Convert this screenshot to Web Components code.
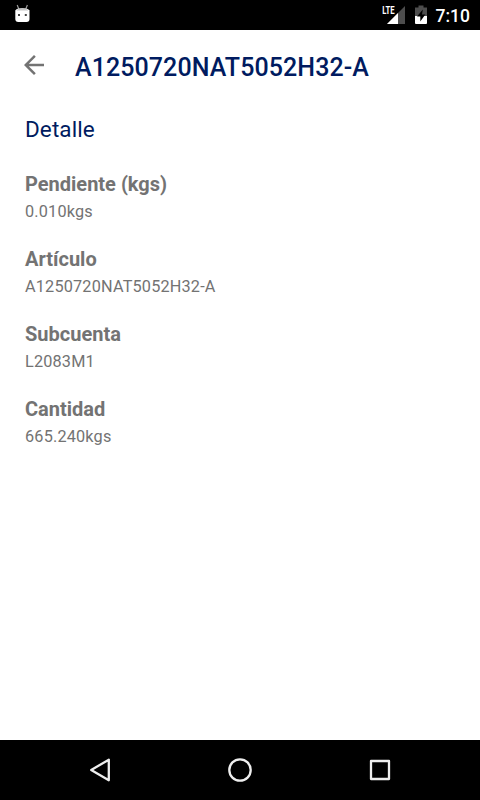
<!DOCTYPE html>
<html lang="es">
<head>
<meta charset="utf-8">
<title>Detalle</title>
<style>
  body {
    margin: 0;
    font-family: Roboto, "Liberation Sans", sans-serif;
  }
</style>
</head>
<body>
<app-screen>
  <status-bar slot="top" time="7:10"></status-bar>
  <title-bar>A1250720NAT5052H32-A</title-bar>
  <detail-section heading="Detalle">
    <detail-item label="Pendiente (kgs)">0.010kgs</detail-item>
    <detail-item label="Artículo">A1250720NAT5052H32-A</detail-item>
    <detail-item label="Subcuenta">L2083M1</detail-item>
    <detail-item label="Cantidad">665.240kgs</detail-item>
  </detail-section>
  <nav-bar slot="bottom"></nav-bar>
</app-screen>
<script>
class AppScreen extends HTMLElement {
  constructor() {
    super();
    this.attachShadow({ mode: 'open' });
  }
  connectedCallback() {
    this.shadowRoot.innerHTML = `
      <style>
        :host {
          display: flex;
          flex-direction: column;
          width: 480px;
          height: 800px;
          background: #fff;
          overflow: hidden;
        }
        main {
          flex: 1;
        }
      </style>
      <slot name="top"></slot>
      <main><slot></slot></main>
      <slot name="bottom"></slot>
    `;
  }
}
customElements.define('app-screen', AppScreen);

class StatusBar extends HTMLElement {
  constructor() {
    super();
    this.attachShadow({ mode: 'open' });
  }
  connectedCallback() {
    const time = this.getAttribute('time') || '';
    this.shadowRoot.innerHTML = `
      <style>
        :host {
          display: flex;
          align-items: center;
          height: 30px;
          padding: 0 10px 0 12px;
          box-sizing: border-box;
          background: #000;
          color: #fff;
        }
        svg {
          display: block;
        }
        .signal {
          margin-left: auto;
        }
        .battery {
          margin-left: 8px;
        }
        .time {
          margin-left: 8px;
          padding-top: 2px;
          font-size: 17.5px;
          line-height: 20px;
          font-weight: 500;
        }
      </style>
      <svg width="20" height="30" viewBox="0 0 20 30">
        <path d="M5.200 5l1.600 4M15.400 5l-1.600 4" stroke="#999" stroke-width="1.200"/>
        <path d="M3.300 10.500Q4.500 8.200 10.300 8.200T17.500 10.500V19Q17.500 22 14.500 22H6.300Q3.300 22 3.300 19z" fill="#fff"/>
        <path d="M4.500 10.500Q6 8.200 10.300 8.200T16.200 10.500z" fill="#c4c4c4"/>
        <path d="M6 14h2v2H6zM12.800 14h2v2h-2z" fill="#444"/>
      </svg>
      <svg class="signal" width="26" height="30" viewBox="0 0 26 30">
        <path d="M25 6v18H7z" fill="#4d4d4d"/>
        <path d="M18 13v11H7z" fill="#fff"/>
        <path d="M0 4h15.500v11H0z" fill="#000"/>
        <text x="2.300" y="14.400" font-size="11.500" font-weight="700" fill="#fff" textLength="12.400" lengthAdjust="spacingAndGlyphs">LTE</text>
      </svg>
      <svg class="battery" width="14" height="30" viewBox="0 0 14 30">
        <path d="M1 7.500h3.500V5.500h5v2H13V24H1z" fill="#4d4d4d"/>
        <path d="M1 16h12v6.800q0 1.200-1.200 1.200H2.200Q1 24 1 22.800z" fill="#fff"/>
        <path d="M8.800 9.500L3 16.500h3.300v5L11.300 14.500H8z" fill="#000"/>
      </svg>
      <span class="time">${time}</span>
    `;
  }
}
customElements.define('status-bar', StatusBar);

class TitleBar extends HTMLElement {
  constructor() {
    super();
    this.attachShadow({ mode: 'open' });
  }
  connectedCallback() {
    this.shadowRoot.innerHTML = `
      <style>
        :host {
          display: flex;
          align-items: center;
          height: 70px;
          padding-left: 19px;
          box-sizing: border-box;
          color: #001b60;
        }
        svg {
          display: block;
          margin-bottom: 1px;
        }
        h1 {
          margin: 0 0 0 26px;
          padding-top: 5px;
          font-size: 25px;
          line-height: 30px;
          font-weight: 500;
          letter-spacing: 0.08px;
        }
      </style>
      <svg width="30" height="30" viewBox="0 0 24 24">
        <path d="M20 11H7.830l5.590-5.590L12 4l-8 8 8 8 1.410-1.410L7.830 13H20v-2z" fill="#737373"/>
      </svg>
      <h1><slot></slot></h1>
    `;
  }
}
customElements.define('title-bar', TitleBar);

class DetailSection extends HTMLElement {
  constructor() {
    super();
    this.attachShadow({ mode: 'open' });
  }
  connectedCallback() {
    const heading = this.getAttribute('heading') || '';
    this.shadowRoot.innerHTML = `
      <style>
        :host {
          display: block;
          padding: 15px 25px 0;
        }
        h2 {
          margin: 0 0 27px;
          font-size: 22.5px;
          line-height: 28px;
          font-weight: 400;
          letter-spacing: 0.1px;
          color: #001b60;
        }
        .items {
          display: flex;
          flex-direction: column;
          gap: 20px;
        }
      </style>
      <h2>${heading}</h2>
      <div class="items"><slot></slot></div>
    `;
  }
}
customElements.define('detail-section', DetailSection);

class DetailItem extends HTMLElement {
  constructor() {
    super();
    this.attachShadow({ mode: 'open' });
  }
  connectedCallback() {
    const label = this.getAttribute('label') || '';
    this.shadowRoot.innerHTML = `
      <style>
        :host {
          display: block;
          color: #737373;
        }
        .label {
          font-size: 20px;
          line-height: 28px;
          font-weight: 700;
        }
        .value {
          font-size: 16.25px;
          line-height: 27px;
          letter-spacing: 0.18px;
        }
      </style>
      <div class="label">${label}</div>
      <div class="value"><slot></slot></div>
    `;
  }
}
customElements.define('detail-item', DetailItem);

class NavBar extends HTMLElement {
  constructor() {
    super();
    this.attachShadow({ mode: 'open' });
  }
  connectedCallback() {
    this.shadowRoot.innerHTML = `
      <style>
        :host {
          display: flex;
          justify-content: center;
          align-items: center;
          gap: 110px;
          height: 60px;
          background: #000;
        }
        svg {
          display: block;
          fill: none;
          stroke: #eee;
          stroke-width: 2.3;
          stroke-linejoin: round;
        }
      </style>
      <svg width="30" height="30" viewBox="0 0 30 30"><path d="M23.800 4.700v20.600L6.200 15z"/></svg>
      <svg width="30" height="30" viewBox="0 0 30 30"><circle cx="15" cy="15" r="10.700"/></svg>
      <svg width="30" height="30" viewBox="0 0 30 30"><rect x="6" y="6" width="18" height="18"/></svg>
    `;
  }
}
customElements.define('nav-bar', NavBar);
</script>
</body>
</html>
